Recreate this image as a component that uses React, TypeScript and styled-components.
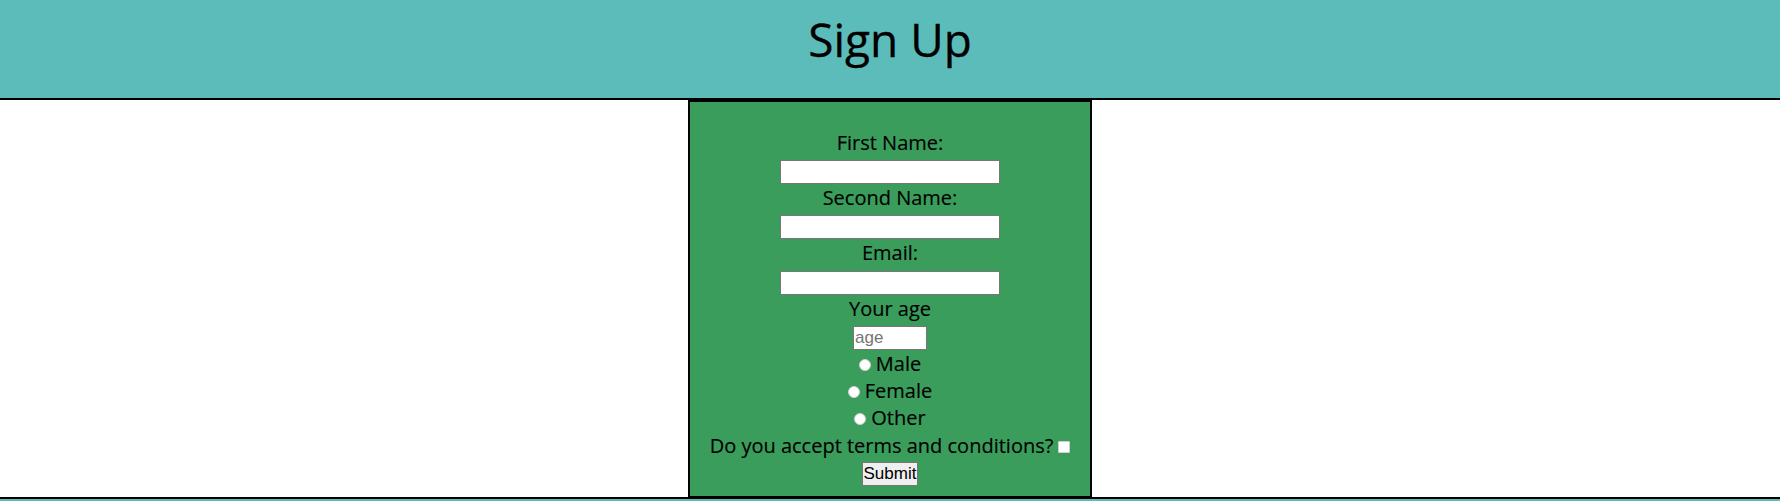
import React from "react";
import styled, { createGlobalStyle } from "styled-components";

const GlobalStyle = createGlobalStyle`
  html, body {
    margin: 0;
    padding: 0;
    overflow: hidden;
  }
  body {
    background: #ffffff;
    color: #000000;
    font-family: "Open Sans", "Liberation Sans", sans-serif;
  }
`;

const Page = styled.div`
  width: 100%;
  display: flex;
  flex-direction: column;
`;

const Header = styled.header`
  height: 98px;
  background: #5bbcb9;
  border-bottom: 2px solid #000;
  text-align: center;
`;

const Title = styled.h1`
  margin: 0;
  padding-top: 8px;
  font-size: 46px;
  font-weight: 400;
  line-height: normal;
  -webkit-text-stroke: 0.3px #000;
`;

const Main = styled.main`
  height: 397px;
  display: flex;
  justify-content: center;
`;

const FormBox = styled.form`
  box-sizing: border-box;
  width: 404px;
  height: 397px;
  padding-top: 27px;
  display: flex;
  flex-direction: column;
  align-items: center;
  background: #3a9d5b;
  border: 2px solid #000;
  border-bottom-width: 1px;
  font-size: 20px;
  line-height: 27.24px;
`;

const Label = styled.label`
  display: block;
  text-align: center;
  white-space: nowrap;
  -webkit-text-stroke: 0.15px #000;
`;

const TextInput = styled.input<{ $width: number }>`
  box-sizing: border-box;
  width: ${(p) => p.$width}px;
  height: 24px;
  margin: 4px 0 0;
  padding: 0 1px;
  border: 1px solid #767676;
  background: #fff;
  font-family: "Liberation Sans", Arial, sans-serif;
  font-size: 17px;
  outline: none;

  &::placeholder {
    color: #757575;
  }
`;

const Radio = styled.input`
  appearance: none;
  display: inline-block;
  box-sizing: border-box;
  width: 12px;
  height: 12px;
  margin: 0 5px 0 0;
  border-radius: 50%;
  border: 1px solid #d0d0d0;
  background: #fff;
  vertical-align: baseline;
`;

const CheckBox = styled.input`
  appearance: none;
  display: inline-block;
  box-sizing: border-box;
  width: 12px;
  height: 12px;
  margin: 0 0 0 5px;
  border-radius: 1px;
  border: 1px solid #d0d0d0;
  background: #fff;
  vertical-align: baseline;
`;

const SubmitButton = styled.button`
  box-sizing: border-box;
  width: 56px;
  height: 24px;
  margin-top: 3px;
  padding: 0;
  border: 1px solid #767676;
  background: #efefef;
  color: #000;
  font-family: "Liberation Sans", Arial, sans-serif;
  font-size: 17px;
  line-height: 20px;
`;

const Footer = styled.footer`
  height: 2px;
  background: #5bbcb9;
  border-top: 2px solid #000;
`;

const genders = ["Male", "Female", "Other"];

const App: React.FC = () => {
  return (
    <Page>
      <GlobalStyle />
      <Header>
        <Title>Sign Up</Title>
      </Header>
      <Main>
        <FormBox onSubmit={(e) => e.preventDefault()}>
          <Label htmlFor="first">First Name:</Label>
          <TextInput id="first" type="text" $width={220} />
          <Label htmlFor="second">Second Name:</Label>
          <TextInput id="second" type="text" $width={220} />
          <Label htmlFor="email">Email:</Label>
          <TextInput id="email" type="email" $width={220} />
          <Label htmlFor="age">Your age</Label>
          <TextInput id="age" type="number" placeholder="age" $width={74} />
          {genders.map((g) => (
            <Label key={g}>
              <Radio type="radio" name="gender" value={g} />
              {g}
            </Label>
          ))}
          <Label>
            Do you accept terms and conditions?
            <CheckBox type="checkbox" />
          </Label>
          <SubmitButton type="submit">Submit</SubmitButton>
        </FormBox>
      </Main>
      <Footer />
    </Page>
  );
};

export default App;
